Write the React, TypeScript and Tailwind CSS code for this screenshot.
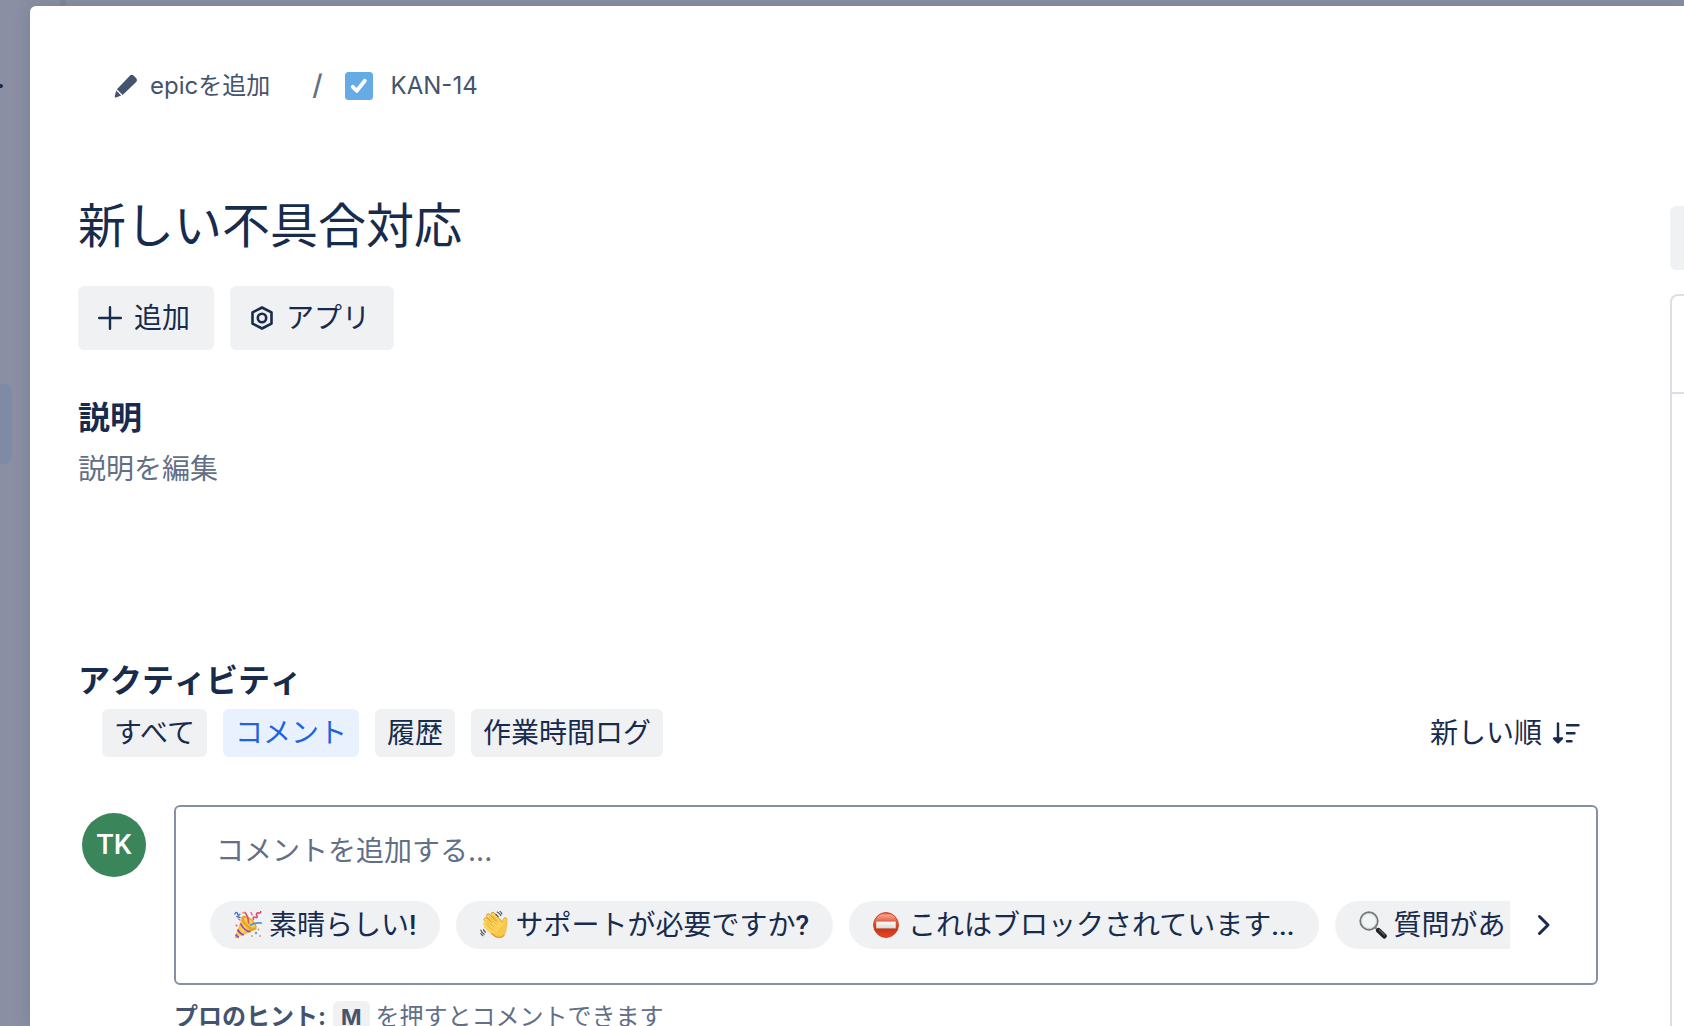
import type { ReactNode } from "react";

const tabs = ["すべて", "コメント", "履歴", "作業時間ログ"];

function PencilIcon() {
    return (
        <svg width="24" height="24" viewBox="0 0 24 24" fill="currentColor" aria-hidden="true">
            <path d="M15.6 1.9a3.2 3.2 0 0 1 4.4 0l2 2a3.2 3.2 0 0 1 .2 4.1L8.6 21 2.9 15.2z" />
            <path d="M2.2 16.6l5 5-5.2 1.9c-.8.2-1.5-.4-1.2-1.2z" />
        </svg>
    );
}

function TaskIcon() {
    return (
        <svg width="28" height="28" viewBox="0 0 28 28" aria-hidden="true">
            <rect width="28" height="28" rx="3.5" fill="#65ACE6" />
            <path d="M7.8 14.8l4 4 8-10" fill="none" stroke="#fff" strokeWidth="3.8" strokeLinecap="round" strokeLinejoin="round" />
        </svg>
    );
}

function PlusIcon() {
    return (
        <svg width="24" height="24" viewBox="0 0 24 24" aria-hidden="true">
            <path d="M12 1.2v21.6M1.2 12h21.6" stroke="currentColor" strokeWidth="2.4" strokeLinecap="round" />
        </svg>
    );
}

function AppIcon() {
    return (
        <svg width="24" height="24" viewBox="0 0 24 24" fill="none" stroke="currentColor" strokeWidth="2.6" strokeLinejoin="round" aria-hidden="true">
            <path d="M12 1.500l9.500 4.900v11.200L12 22.500l-9.500-4.900V6.400z" />
            <circle cx="12" cy="12" r="4.200" />
        </svg>
    );
}

function SortIcon() {
    return (
        <svg width="28" height="24" viewBox="0 0 28 24" fill="none" stroke="currentColor" strokeWidth="2.400" strokeLinecap="round" strokeLinejoin="round" aria-hidden="true">
            <path d="M6 2.500v16" />
            <path d="M2 17.500h8L6 21.500z" fill="currentColor" />
            <path d="M15 4.200h11.500M15 12.200h7.500M15 20.200h4.500" />
        </svg>
    );
}

function ChevronIcon() {
    return (
        <svg width="14" height="22" viewBox="0 0 14 22" fill="none" stroke="currentColor" strokeWidth="3" strokeLinecap="round" strokeLinejoin="round" aria-hidden="true">
            <path d="M2.500 2.500L11 11l-8.500 8.500" />
        </svg>
    );
}

function PartyIcon() {
    return (
        <svg width="28" height="28" viewBox="0 0 28 28" fill="none" aria-hidden="true">
            <defs>
                <linearGradient id="cone" x1="3" y1="14" x2="17" y2="22" gradientUnits="userSpaceOnUse">
                    <stop offset="0" stopColor="#F2B631" />
                    <stop offset=".5" stopColor="#FBD65B" />
                    <stop offset="1" stopColor="#DE981F" />
                </linearGradient>
            </defs>
            <path d="M8.200 6.600L.6 26.300c-.2.9.5 1.400 1.300 1.100L22.400 18z" fill="url(#cone)" />
            <ellipse cx="15" cy="12" rx="4.600" ry="9.400" transform="rotate(-48 15 12)" fill="#E6A42B" />
            <ellipse cx="15.600" cy="11.600" rx="2.800" ry="7" transform="rotate(-48 15.600 11.600)" fill="#F9D14B" />
            <path d="M6.500 12.500c2.500 5 5.500 7.800 10 8.300M3.600 18.500c1.600 3 3.400 4.700 6.200 5.500M1.800 23.500c.8 1.500 1.600 2.300 3 2.900" stroke="#8A42B8" strokeWidth="1.600" />
            <path d="M14.500 12C14.800 7.500 13.500 5 11 1.500" stroke="#E8506B" strokeWidth="1.800" strokeLinecap="round" />
            <path d="M16.500 14c3.500-2 6.500-2.500 11-2" stroke="#4F8FE8" strokeWidth="1.600" strokeLinecap="round" />
            <path d="M.8 3c1-2 2.600-2 2.700-.2s1.400 2 2.400.4M2.800 5.500l3.200 1" stroke="#4A72D8" strokeWidth="1.400" strokeLinecap="round" />
            <path d="M19.500 8.500c-1-1.900.6-3 2-2.100s2.300-.4 1.300-1.900 0-2.800 1.600-2.600 2.600-.2 2.300-1.300" stroke="#E0446A" strokeWidth="1.500" strokeLinecap="round" />
            <path d="M17 1.500l1.200 2.500M6 9l-1.500-1" stroke="#E96A86" strokeWidth="1.500" strokeLinecap="round" />
            <g fill="#F2994A">
                <circle cx="18" cy="25" r="1" />
                <circle cx="24.500" cy="18.500" r="1" />
                <circle cx="9" cy="1.800" r="1" />
            </g>
            <circle cx="22" cy="22" r="1.200" fill="#5A9BEA" />
            <circle cx="26" cy="25" r="1" fill="#EC8AA0" />
            <circle cx="2.500" cy="14.500" r="1" fill="#E05A7A" />
        </svg>
    );
}

function WaveIcon() {
    return (
        <svg width="28" height="28" viewBox="0 0 28 28" fill="none" strokeLinecap="round" aria-hidden="true">
            <path d="M7.500 12.500l9.500 9M5.800 8.500l12 11M8.200 4.700l11.300 11.300M12.800 3.200l8.700 9.500" stroke="#D99A2B" strokeWidth="4.400" />
            <path d="M9 13l9.500 9.500 6-1.500 2-6.500.4-6.500c0-1.800-2.800-2-3.400-.2l-1.200 3.700-5-1z" fill="#F8CC4F" stroke="#F0B43A" strokeWidth="1" />
            <path d="M5.800 16l6 6.200c3 4 9 6 12.300 2.500 2.500-2.700 2.800-6 2.300-10l-6-1.500-8 1z" fill="#F7C94B" />
            <path d="M5.500 15.600l6 6M4.700 12.500l9 8.500M5.800 8.700l11 10M8.200 4.900l10.800 11M12.800 3.400l8.700 10" stroke="#FAD35B" strokeWidth="3.200" />
            <path d="M6.800 14l5.500 5M7.500 10l6.500 6M9.500 6.200l7 7M13 5l5 5.500" stroke="#E3A12F" strokeWidth=".7" />
            <path d="M12 22.800c3.600 4 9 5 12 1.600" stroke="#DE9430" strokeWidth="1.300" />
            <path d="M17.200 1c1.600.7 2.800 1.900 3.600 3.600M15.800 3.200c1 .6 1.800 1.400 2.400 2.500M20 .4c.9.700 1.500 1.500 1.900 2.600M.8 19c.6 2 1.700 3.400 3.500 4.300M3.400 18.500c.4 1.200 1.100 2 2.200 2.700M.8 22.500c.6 1 1.200 1.700 2.200 2.200" stroke="#505154" strokeWidth="1.100" />
        </svg>
    );
}

function NoEntryIcon() {
    return (
        <svg width="28" height="28" viewBox="0 0 28 28" aria-hidden="true">
            <defs>
                <linearGradient id="sign" x1="0" y1="1" x2="0" y2="27" gradientUnits="userSpaceOnUse">
                    <stop offset="0" stopColor="#E2401F" />
                    <stop offset=".12" stopColor="#F4A08C" />
                    <stop offset=".4" stopColor="#E4573B" />
                    <stop offset=".65" stopColor="#C93418" />
                    <stop offset="1" stopColor="#EA4A29" />
                </linearGradient>
                <linearGradient id="bar" x1="0" y1="10" x2="0" y2="18" gradientUnits="userSpaceOnUse">
                    <stop offset="0" stopColor="#fff" />
                    <stop offset="1" stopColor="#D8D5CF" />
                </linearGradient>
            </defs>
            <circle cx="13" cy="14" r="12.400" fill="url(#sign)" stroke="#D43B1D" />
            <rect x="3" y="10.200" width="20" height="7.400" fill="url(#bar)" stroke="#B35A3C" strokeWidth=".5" />
        </svg>
    );
}

function SearchIcon() {
    return (
        <svg width="28" height="28" viewBox="0 0 28 28" fill="none" strokeLinecap="round" aria-hidden="true">
            <path d="M16.300 16.500l3 3" stroke="#8D8D8D" strokeWidth="2.400" />
            <path d="M19.500 19.500l5.800 5.500" stroke="#232323" strokeWidth="5" />
            <path d="M20.200 18.800l5.300 5" stroke="#6B6B6B" strokeWidth="1.100" />
            <circle cx="10" cy="10" r="8.700" fill="#EFF4F4" stroke="#76797B" strokeWidth="1.900" />
            <circle cx="10" cy="10" r="7.500" stroke="#CBD0D2" strokeWidth=".9" />
        </svg>
    );
}

function Chip({ icon, text, mark }: { icon: ReactNode; text: string; mark: string }) {
    return (
        <button className="flex h-12 shrink-0 items-center gap-[7px] whitespace-nowrap rounded-full bg-[#F0F1F3] px-6 text-[28px] leading-10">
            {icon}
            <span>
                {text}
                <span className="font-[Roboto] font-medium">{mark}</span>
            </span>
        </button>
    );
}

function Breadcrumb() {
    return (
        <nav className="flex h-7 items-center pl-9 text-2xl text-[#44546F]">
            <button className="flex items-center gap-3">
                <PencilIcon />
                <span>epicを追加</span>
            </button>
            <span className="ml-[42px] text-[28px] font-medium text-[#626F86]">/</span>
            <a href="#" className="ml-[22px] flex items-center gap-[18px]">
                <TaskIcon />
                <span>KAN-14</span>
            </a>
        </nav>
    );
}

function Activity() {
    return (
        <section className="mt-[172px]">
            <h2 className="text-[32px] leading-10 font-bold [font-kerning:none]">アクティビティ</h2>
            <div className="mt-2 flex items-center justify-between pl-6 pr-[18px]">
                <div className="flex gap-4">
                    {tabs.map((tab) => (
                        <button
                            key={tab}
                            className={
                                tab === "コメント"
                                    ? "h-12 rounded-md bg-[#E9F1FF] px-3 text-[28px] leading-10 text-[#1D63E0]"
                                    : "h-12 rounded-md bg-[#F0F1F3] px-3 text-[28px] leading-10"
                            }
                        >
                            {tab}
                        </button>
                    ))}
                </div>
                <button className="flex items-center gap-2.5 text-[28px] leading-10">
                    新しい順
                    <SortIcon />
                </button>
            </div>
            <div className="mt-12 flex pl-1">
                <div className="mt-2 flex size-16 shrink-0 items-center justify-center rounded-full bg-[#3B855B] font-[Roboto] text-[28px] font-medium text-white">
                    TK
                </div>
                <div className="ml-7 min-w-0 flex-1">
                    <div className="rounded-md border-2 border-[#8590A2] pt-6 pb-[34px] pl-[34px] pr-[45px]">
                        <input
                            type="text"
                            aria-label="コメントを追加する"
                            placeholder="コメントを追加する..."
                            className="block h-10 w-full px-1.5 text-[28px] outline-none placeholder:text-[#626F86]"
                        />
                        <div className="mt-[30px] flex items-center">
                            <div className="flex min-w-0 flex-1 gap-4 overflow-hidden">
                                <Chip icon={<PartyIcon />} text="素晴らしい" mark="!" />
                                <Chip icon={<WaveIcon />} text="サポートが必要ですか" mark="?" />
                                <Chip icon={<NoEntryIcon />} text="これはブロックされています" mark="..." />
                                <Chip icon={<SearchIcon />} text="質問があります" mark="..." />
                            </div>
                            <button aria-label="次へ" className="ml-[27px]">
                                <ChevronIcon />
                            </button>
                        </div>
                    </div>
                    <p className="mt-4 flex items-center whitespace-nowrap text-2xl leading-8 text-[#626F86]">
                        <strong className="text-[#44546F]">プロのヒント:</strong>
                        <kbd className="mr-1.5 ml-[7px] rounded-md bg-[#F0F1F3] px-2 font-[Inter] text-[22px] font-bold text-[#44546F]">M</kbd>
                        を押すとコメントできます
                    </p>
                </div>
            </div>
        </section>
    );
}

function App() {
    return (
        <div className="flex h-screen flex-col overflow-hidden bg-[#8A8FA3] font-['Inter','Noto_Sans_CJK_JP',sans-serif] text-[#172B4D]">
            <div className="h-1.5 shrink-0 pl-[60px]">
                <div className="h-full w-1.5 bg-[#82869B]" />
            </div>
            <div className="flex min-h-0 flex-1">
                <div className="w-[30px] shrink-0 pt-[78px]">
                    <div className="h-1 w-[3px] rounded-r-full bg-[#172B4D]" />
                    <div className="mt-[296px] h-20 w-3 rounded-r-lg bg-[#7F8AA5]" />
                </div>
                <main className="flex min-w-0 flex-1 rounded-tl-md bg-white pl-12 shadow-[0_0_16px_rgba(70,90,115,0.25)]">
                    <div className="min-w-0 flex-1 pt-[66px]">
                        <Breadcrumb />
                        <h1 className="mt-[98px] text-5xl leading-14">新しい不具合対応</h1>
                        <div className="mt-8 flex gap-4 text-[28px] leading-10">
                            <button className="flex h-16 items-center gap-3 rounded-md bg-[#F0F1F3] pl-5 pr-6">
                                <PlusIcon />
                                追加
                            </button>
                            <button className="flex h-16 items-center gap-3 rounded-md bg-[#F0F1F3] pl-5 pr-6">
                                <AppIcon />
                                アプリ
                            </button>
                        </div>
                        <h2 className="mt-12 text-[32px] leading-10 font-bold">説明</h2>
                        <p className="mt-[11px] text-[28px] leading-10 text-[#626F86]">説明を編集</p>
                        <Activity />
                    </div>
                    <aside className="ml-[72px] w-3.5 shrink-0 overflow-hidden pt-[200px]">
                        <div className="h-16 rounded-l-md bg-[#F0F1F3]" />
                        <div className="mt-6 h-full rounded-tl-lg border-t-2 border-l-2 border-[#DCDFE4] pt-24">
                            <div className="h-0.5 bg-[#DCDFE4]" />
                        </div>
                    </aside>
                </main>
            </div>
        </div>
    );
}

export default App;
